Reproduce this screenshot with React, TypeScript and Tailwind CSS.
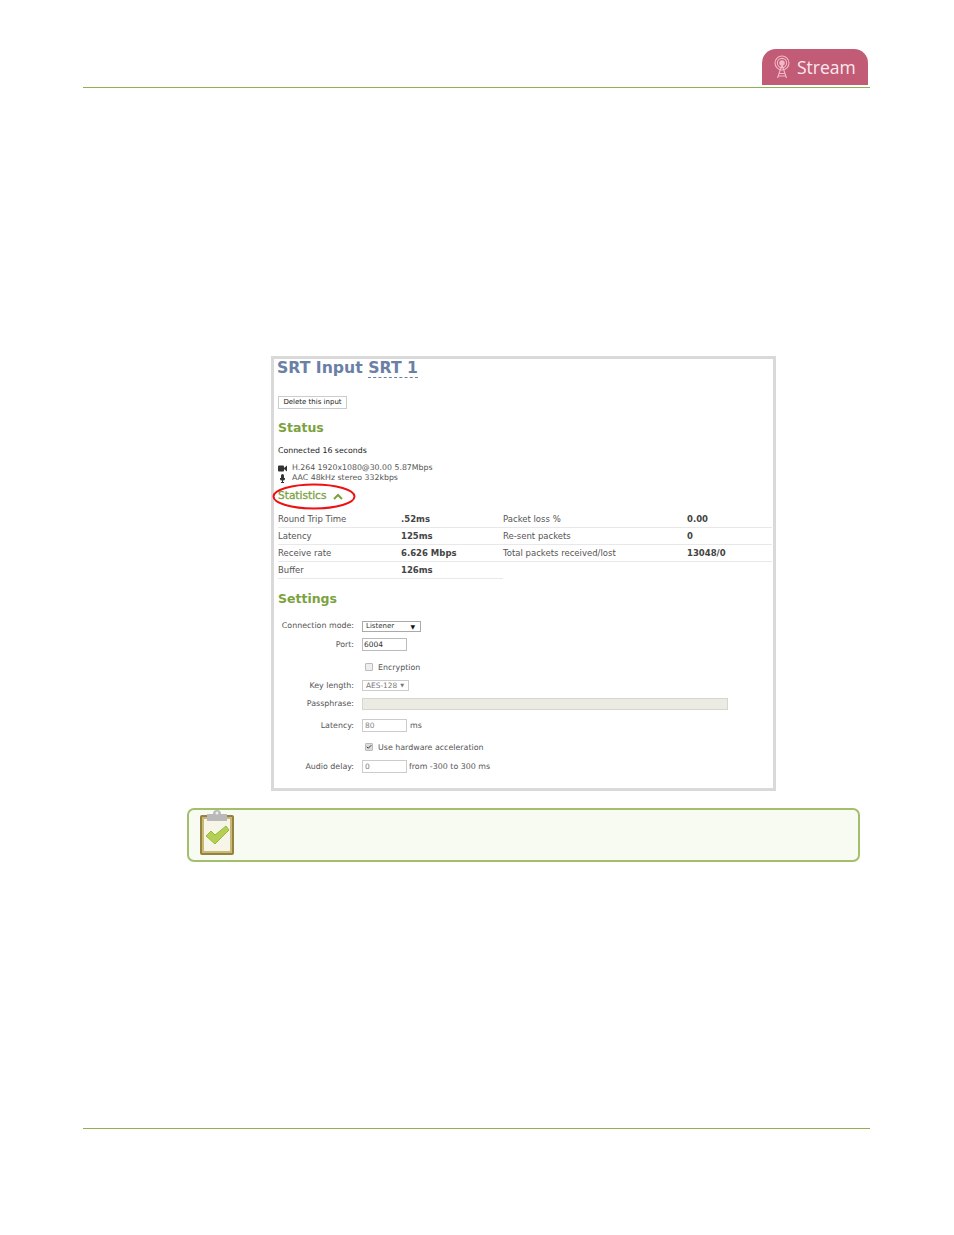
import { Check } from "lucide-react";

const font = "font-['DejaVu_Sans',sans-serif]";

const stats = [
  { label: "Round Trip Time", value: ".52ms" },
  { label: "Packet loss %", value: "0.00" },
  { label: "Latency", value: "125ms" },
  { label: "Re-sent packets", value: "0" },
  { label: "Receive rate", value: "6.626 Mbps" },
  { label: "Total packets received/lost", value: "13048/0" },
  { label: "Buffer", value: "126ms" },
];

function StatRow({ label, value, right }: { label: string; value: string; right: boolean }) {
  return (
    <div className="flex h-[17px] items-center border-b border-[#e8e8e8] text-[8.5px]">
      <span className={`text-[#555] ${right ? "w-[184px]" : "w-[123px]"}`}>{label}</span>
      <span className="font-bold text-[#444]">{value}</span>
    </div>
  );
}

function FormRow({ label, children, className }: { label?: string; children: React.ReactNode; className: string }) {
  return (
    <div className={`flex items-center ${className}`}>
      <span className="w-[76px] shrink-0 whitespace-nowrap text-right text-[7.9px] text-[#555]">{label}</span>
      <div className="ml-2 flex items-center text-[7.9px] text-[#555]">{children}</div>
    </div>
  );
}

function TowerIcon() {
  return (
    <svg width="18" height="24" viewBox="0 0 18 24" fill="none" stroke="#f3b9c6" strokeWidth="1.1">
      <circle cx="9" cy="8" r="7" />
      <circle cx="9" cy="8" r="4.6" />
      <circle cx="9" cy="8" r="2.2" fill="#f3b9c6" />
      <path d="M9 10 L4.5 23 M9 10 L13.5 23 M6 18.5 H12 M5.2 21 H12.8" />
    </svg>
  );
}

function ClipboardIcon() {
  return (
    <svg width="36" height="47" viewBox="0 0 36 47" className="block">
      <rect x="1" y="6" width="34" height="40" rx="2" fill="#94823f" />
      <rect x="3" y="8" width="30" height="36" fill="#c9b878" />
      <rect x="5" y="10" width="26" height="32" fill="#f6f5e8" />
      <path d="M8 5 H14 A4 4 0 0 1 22 5 H28 V12 H8 Z" fill="#b9b9b9" />
      <circle cx="18" cy="4" r="1.5" fill="#eee" />
      <path d="M7 27 L12 22 L16 26 L27 17 L30 21 L16 35 Z" fill="#b5cf55" stroke="#9ab83e" strokeWidth="1" />
    </svg>
  );
}

export default function App() {
  return (
    <div className={`h-[1235px] w-[954px] overflow-hidden bg-white ${font}`}>
      {/* Header */}
      <header className="ml-[83px] mt-[49px] h-[39px] w-[787px] border-b border-[#8fb04f]">
        <div className="ml-[679px] flex h-[36px] w-[106px] items-center rounded-t-[14px] bg-[#c15b76] pl-[11px]">
          <TowerIcon />
          <span className="ml-[6px] translate-y-[1px] font-['Open_Sans',sans-serif] text-[17.5px] leading-none text-[#fbe9ee]">Stream</span>
        </div>
      </header>

      {/* Screenshot */}
      <section className="relative ml-[271px] mt-[268px] h-[435px] w-[505px] border-[3px] border-[#d9d9d9] pl-[4px] pr-[1px]">
        <h1 className="ml-[-1px] mt-[-1px] text-[15.7px] font-bold leading-[19px] text-[#6a80a6]">
          SRT Input <span className="border-b border-dashed border-[#6a80a6]">SRT 1</span>
        </h1>
        <button className="mt-[19px] block h-[13px] w-[69px] border border-[#ccc] bg-white text-[7px] leading-none text-[#222]">
          Delete this input
        </button>
        <h2 className="mt-[10px] text-[12.5px] font-bold leading-[18px] text-[#7ba23f]">Status</h2>
        <p className="mt-[8px] text-[7.8px] leading-[12px] text-[#222]">Connected 16 seconds</p>
        <div className="mt-[6px] flex h-[10px] items-center text-[7.8px] text-[#555]">
          <svg width="9" height="7" viewBox="0 0 9 7" className="mr-[5px]" fill="#333">
            <rect y="0.5" width="6" height="6" rx="1" />
            <path d="M6 3 L9 0.5 V6.5 L6 4 Z" />
          </svg>
          H.264 1920x1080@30.00 5.87Mbps
        </div>
        <div className="flex h-[10px] items-center text-[7.8px] text-[#555]">
          <svg width="9" height="9" viewBox="0 0 9 9" className="mr-[5px]" fill="#333">
            <rect x="3" y="0" width="3" height="5" rx="1.5" />
            <path d="M2 4 V5 Q2 6.5 4 6.6 V8 H3 V9 H6 V8 H5 V6.6 Q7 6.5 7 5 V4" />
          </svg>
          AAC 48kHz stereo 332kbps
        </div>
        <div className="mt-[7px] flex h-[12px] items-center text-[10.6px] text-[#7ba23f] [-webkit-text-stroke:0.3px_#7ba23f]">
          Statistics
          <svg width="10" height="7" viewBox="0 0 10 7" className="ml-[7px]" fill="none" stroke="#7ba23f" strokeWidth="2">
            <path d="M1 6 L5 2 L9 6" />
          </svg>
        </div>
        <svg width="86" height="28" viewBox="0 0 86 28" className="absolute left-[-2px] top-[124px]" fill="none" stroke="#ee1111" strokeWidth="2">
          <ellipse cx="42" cy="13.5" rx="40.5" ry="12" />
        </svg>

        <div className="mt-[9px] grid grid-cols-[225px_269px]">
          {stats.map((s, i) => (
            <StatRow key={s.label} label={s.label} value={s.value} right={i % 2 === 1} />
          ))}
        </div>

        <h2 className="mt-[11px] text-[12.5px] font-bold leading-[18px] text-[#7ba23f]">Settings</h2>

        <FormRow label="Connection mode:" className="mt-[12px] h-[12px]">
          <div className="flex h-[11px] w-[59px] items-center justify-between border border-[#aaa] bg-white pl-[3px] pr-[5px] text-[7px] text-[#333]">
            Listener <span className="text-[6px] text-[#111]">▼</span>
          </div>
        </FormRow>
        <FormRow label="Port:" className="mt-[6px] h-[13px]">
          <div className="h-[13px] w-[45px] border border-[#bbb] pl-[1px] text-[7.5px] leading-[11px] text-[#333]">6004</div>
        </FormRow>
        <FormRow className="mt-[11px] h-[10px]">
          <div className="ml-[3px] h-[8px] w-[8px] rounded-[1px] border border-[#bbb] bg-[#eee]" />
          <span className="ml-[5px] translate-y-[1px]">Encryption</span>
        </FormRow>
        <FormRow label="Key length:" className="mt-[8px] h-[11px]">
          <div className="flex h-[11px] w-[47px] items-center border border-[#ccc] pl-[3px] text-[7.4px] text-[#777]">
            AES-128 <span className="ml-[3px] text-[5px]">▼</span>
          </div>
        </FormRow>
        <FormRow label="Passphrase:" className="mt-[7px] h-[12px]">
          <div className="h-[12px] w-[366px] border border-[#d5d5cc] bg-[#ebebe4]" />
        </FormRow>
        <FormRow label="Latency:" className="mt-[9px] h-[13px]">
          <div className="h-[13px] w-[45px] border border-[#ccc] pl-[2px] text-[7.5px] leading-[11px] text-[#888]">80</div>
          <span className="ml-[3px]">ms</span>
        </FormRow>
        <FormRow className="mt-[10px] h-[10px]">
          <div className="ml-[3px] flex h-[8px] w-[8px] items-center justify-center rounded-[1px] border border-[#bbb] bg-[#ddd]">
            <Check size={8} strokeWidth={4} className="text-[#333]" />
          </div>
          <span className="ml-[5px] translate-y-[1px]">Use hardware acceleration</span>
        </FormRow>
        <FormRow label="Audio delay:" className="mt-[8px] h-[13px]">
          <div className="h-[13px] w-[45px] border border-[#ccc] pl-[2px] text-[7.5px] leading-[11px] text-[#777]">0</div>
          <span className="ml-[2px]">from -300 to 300 ms</span>
        </FormRow>
      </section>

      {/* Note */}
      <section className="relative ml-[187px] mt-[17px] h-[54px] w-[673px] rounded-[7px] border-2 border-[#a3bf6c] bg-[#f8fbf1]">
        <div className="absolute left-[10px] top-[-1px]">
          <ClipboardIcon />
        </div>
      </section>

      {/* Footer */}
      <div className="ml-[83px] mt-[266px] h-px w-[787px] bg-[#8fb04f]" />
    </div>
  );
}
